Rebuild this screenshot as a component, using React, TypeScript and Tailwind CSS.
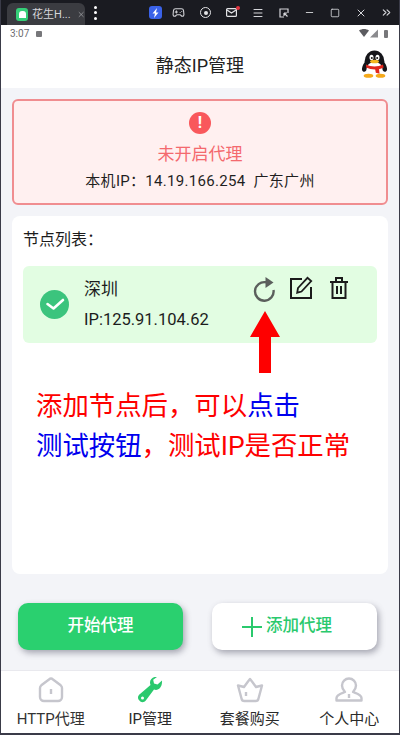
import React from "react";
import { Minus, Square, X, ChevronsRight, Menu, Gamepad2 } from "lucide-react";

const CJK = "font-['Roboto','Noto_Sans_CJK_SC',sans-serif]";
const COMMA = "\uFF0C";
const COLON = "\uFF1A";

const Penguin = () => (
  <svg width="27" height="28" viewBox="0 0 27 28">
    <ellipse cx="13.5" cy="12" rx="10" ry="11.5" fill="#15151a" />
    <ellipse cx="4" cy="17" rx="2.6" ry="5" fill="#15151a" transform="rotate(18 4 17)" />
    <ellipse cx="23" cy="17" rx="2.6" ry="5" fill="#15151a" transform="rotate(-18 23 17)" />
    <ellipse cx="13.5" cy="19" rx="8" ry="7" fill="#fff" />
    <ellipse cx="10.5" cy="7.5" rx="2" ry="2.8" fill="#fff" />
    <ellipse cx="16.5" cy="7.5" rx="2" ry="2.8" fill="#fff" />
    <circle cx="10.8" cy="8" r="1" fill="#111" />
    <circle cx="16.2" cy="8" r="1" fill="#111" />
    <ellipse cx="13.5" cy="11.5" rx="4.5" ry="1.8" fill="#f5b71e" />
    <path d="M5 14.5c5 2.5 12 2.5 17 0l.6 3c-1.5.9-3 1.4-4.6 1.7l.6 4.6-3.8-1-.6-3.4c-3.4 0-6.6-.7-9-2z" fill="#e0261c" />
    <ellipse cx="7.5" cy="25.8" rx="4.8" ry="2" fill="#f5a91a" />
    <ellipse cx="19.5" cy="25.8" rx="4.8" ry="2" fill="#f5a91a" />
  </svg>
);

const TitleBar = () => (
  <div className="flex h-[25px] shrink-0 items-end bg-[#1a1b21] pl-[6px] text-[#d5d6da]">
    <div className="flex h-[22px] w-[78px] items-center rounded-t-[6px] bg-[#3b3c41] pl-[9px]">
      <div className="flex h-[13px] w-[13px] items-center justify-center rounded-[3px] bg-[#35cf78]">
        <div className="h-[7px] w-[7px] rounded-t-[3px] bg-white" />
      </div>
      <span className="ml-[4px] text-[11px] leading-none whitespace-nowrap">花生H...</span>
      <X size={9} className="ml-[6px] text-[#a9aaae]" />
    </div>
    <div className="ml-[9px] flex h-[25px] flex-col items-center justify-center gap-[2.5px]">
      <div className="h-[3px] w-[3px] rounded-full bg-white" />
      <div className="h-[3px] w-[3px] rounded-full bg-white" />
      <div className="h-[3px] w-[3px] rounded-full bg-white" />
    </div>
    <div className="ml-[52px] flex h-[25px] items-center justify-center">
      <div className="flex h-[13px] w-[13px] items-center justify-center rounded-[3px] bg-[#3a62e8]">
        <svg width="7" height="10" viewBox="0 0 7 10" fill="#fff">
          <path d="M5 0L0.500 5.500H3L2 10l4.500-5.500H4z" />
        </svg>
      </div>
    </div>
    <div className="ml-[10px] flex h-[25px] items-center">
      <Gamepad2 size={13} />
    </div>
    <div className="ml-[15px] flex h-[25px] items-center">
      <div className="flex h-[11px] w-[11px] items-center justify-center rounded-full border-[1.5px] border-[#e2e3e6]">
        <div className="h-[4px] w-[4px] rounded-full bg-[#e2e3e6]" />
      </div>
    </div>
    <div className="relative ml-[15px] flex h-[25px] items-center">
      <svg width="11" height="9" viewBox="0 0 11 9" fill="none" stroke="#e2e3e6" strokeWidth="1.2">
        <rect x="0.6" y="0.6" width="9.8" height="7.8" rx="1" />
        <path d="M1 2l4.500 3L10 2" />
      </svg>
      <div className="absolute top-[6px] -right-[3px] h-[4px] w-[4px] rounded-full bg-[#e3343f]" />
    </div>
    <div className="ml-[15px] flex h-[25px] items-center">
      <Menu size={12} />
    </div>
    <div className="ml-[15px] flex h-[25px] items-center">
      <svg width="10" height="10" viewBox="0 0 10 10" fill="none" stroke="#d5d6da" strokeWidth="1.2">
        <path d="M9 5V1H1v8h4M5 5l3.500 3.500M5 5v3M5 5h3" />
      </svg>
    </div>
    <div className="ml-[15px] flex h-[25px] items-center">
      <Minus size={11} />
    </div>
    <div className="ml-[15px] flex h-[25px] items-center">
      <Square size={10} />
    </div>
    <div className="ml-[15px] flex h-[25px] items-center">
      <X size={12} />
    </div>
    <div className="ml-[13px] flex h-[25px] items-center">
      <ChevronsRight size={13} />
    </div>
  </div>
);

const StatusBar = () => (
  <div className="flex h-[17px] shrink-0 items-center bg-white pr-[11px] pl-[9px] text-[#6d6d70]">
    <span className="text-[10px] leading-none">3:07</span>
    <div className="ml-[7px] h-[6px] w-[6px] rounded-[1px] bg-[#77777a]" />
    <div className="ml-auto flex items-center gap-[1px]">
      <svg width="20" height="9" viewBox="0 0 20 9" fill="#5c5c60">
        <path d="M0 1.500C3-.5 7-.5 10 1.500L5 8z" />
        <path d="M19 0.500V8.500H11z" fill="#8b8b8e" />
      </svg>
      <div className="ml-[4px] h-[8px] w-[4px] rounded-[1px] bg-[#77777a]" />
    </div>
  </div>
);

const Header = () => (
  <div className="relative flex h-[46px] shrink-0 items-center justify-center bg-white pt-[1px]">
    <span className="text-[18px] leading-none text-[#222]">静态IP管理</span>
    <div className="absolute top-[8px] right-[11px]">
      <Penguin />
    </div>
  </div>
);

const ProxyStatus = () => (
  <div className="flex h-[106px] flex-col items-center rounded-[6px] border-2 border-[#f08d90] bg-[#fff0f0] pt-[11px]">
    <div className="flex h-[22px] w-[22px] items-center justify-center rounded-full bg-[#f9585c] text-[16px] leading-none font-bold text-white">
      !
    </div>
    <div className="mt-[9px] text-[17px] leading-[22px] text-[#f4696e]">未开启代理</div>
    <div className="mt-[6px] text-[15px] leading-[20px] tracking-[0.3px] whitespace-pre text-[#1f1f1f]">
      本机IP{COLON}14.19.166.254{"  "}广东广州
    </div>
  </div>
);

const NodeRow = () => (
  <div className="relative mt-[14px] flex h-[77px] items-center rounded-[6px] bg-[#e2fde2] pl-[17px]">
    <div className="flex h-[29px] w-[29px] items-center justify-center rounded-full bg-[#3bc47d]">
      <svg width="20" height="13" viewBox="0 0 20 13" fill="none" stroke="#fff" strokeWidth="2.6" strokeLinecap="round" strokeLinejoin="round">
        <path d="M2.500 6l6 4.500L18 2" />
      </svg>
    </div>
    <div className="ml-[15px] text-[16.500px] text-[#1c1c1c]">
      <div className="mb-[9px] text-[17px] leading-[22px]">深圳</div>
      <div className="leading-[22px]">IP:125.91.104.62</div>
    </div>
    <div className="absolute top-[10px] left-[229px] flex items-start">
      <svg width="24" height="26" viewBox="0 0 24 26" fill="none">
        <path d="M14 6.300A9.300 9.300 0 1 0 21.500 14" stroke="#5b5f5c" strokeWidth="2.400" />
        <path d="M13.500 1l8 5.500-8 5.500z" fill="#5b5f5c" />
      </svg>
      <svg className="ml-[13px]" width="24" height="24" viewBox="0 0 24 24" fill="none" stroke="#1b1b1b" strokeWidth="2">
        <path d="M13 3H2v19h20V11" />
        <path d="M9 12L18.500 1.800l3.700 3.200L12.500 15.500l-4.300 1.200z" strokeWidth="1.800" />
      </svg>
      <svg className="ml-[16px]" width="20" height="24" viewBox="0 0 20 24" fill="none" stroke="#1b1b1b" strokeWidth="2">
        <path d="M1 6h18M7 6V2h6v4M3.500 6v16h13V6M8 10v8M12 10v8" />
      </svg>
    </div>
  </div>
);

const RedArrow = () => (
  <svg className="absolute top-[311px] left-[248px]" width="32" height="62" viewBox="0 0 32 62">
    <path d="M16 0l15 26h-9v36H10V26H1z" fill="#fe0000" />
  </svg>
);

const Tip = () => (
  <div className="mt-[43px] ml-[13px] text-[26.400px] leading-[40px] whitespace-pre text-[#fe0000]">
    <div>
      添加节点后{COMMA}可以<span className="text-[#0000ee]">点击</span>
    </div>
    <div>
      <span className="text-[#0000ee]">测试按钮</span>
      {COMMA}测试IP是否正常
    </div>
  </div>
);

const NodeList = () => (
  <div className="mt-[11px] h-[358px] rounded-[8px] bg-white px-[11px] pt-[12px]">
    <div className="text-[16px] leading-[24px] text-[#1c1c1c]">节点列表{COLON}</div>
    <NodeRow />
    <Tip />
  </div>
);

const Actions = () => (
  <div className="mt-[29px] flex justify-between pr-[22px] pl-[17px]">
    <button className="h-[47px] w-[165px] rounded-[10px] bg-[#2ad06f] text-[16.500px] font-medium text-white shadow-[2px_3px_6px_rgba(70,70,90,0.45)]">
      开始代理
    </button>
    <button className="flex h-[47px] w-[165px] items-center justify-center rounded-[10px] bg-white pr-[15px] text-[16.500px] font-medium text-[#2ac96d] shadow-[2px_3px_6px_rgba(70,70,90,0.45)]">
      <svg className="mr-[4px]" width="20" height="20" viewBox="0 0 20 20" stroke="#2ac96d" strokeWidth="2">
        <path d="M0 10h20M10 0v20" />
      </svg>
      添加代理
    </button>
  </div>
);

const NAV_ITEMS = [
  {
    label: "HTTP代理",
    icon: (
      <svg width="26" height="26" viewBox="0 0 26 26" fill="none" stroke="#c6c6cd" strokeWidth="2.400">
        <path d="M2 11c0-1 .5-2 1.300-2.700L11 2.500a3 3 0 0 1 4 0l7.700 5.800c.8.700 1.300 1.700 1.300 2.700V20a4 4 0 0 1-4 4H6a4 4 0 0 1-4-4z" strokeLinejoin="round" />
        <path d="M13 12v5" />
      </svg>
    ),
  },
  {
    label: "IP管理",
    icon: (
      <svg width="26" height="26" viewBox="0 0 26 26" fill="#2ac96d">
        <path d="M25 3.500l-4.500 4-3.500-1-.8-3.700L20 0c-3.500-.8-7 2-7 5.500 0 1 .2 1.800.5 2.500L3 17c-2 1.600-2.500 3.500-1.500 5.500l1.800 2c2 1.200 4 .8 5.500-1L17 12.500c3.800 1.500 8.500-1.500 8-9zM5.500 22.500a1.500 1.500 0 1 1 0-3 1.500 1.500 0 0 1 0 3z" />
      </svg>
    ),
  },
  {
    label: "套餐购买",
    icon: (
      <svg width="28" height="26" viewBox="0 0 28 26" fill="none" stroke="#c6c6cd" strokeWidth="2.400" strokeLinejoin="round">
        <path d="M2 8.500l6 1.500 4-5.500 2-2.500 2 2.500 4 5.500 6-1.500-3.500 13a3 3 0 0 1-3 2.500H8.500a3 3 0 0 1-3-2.500z" />
        <path d="M10 15v4" />
      </svg>
    ),
  },
  {
    label: "个人中心",
    icon: (
      <svg width="28" height="26" viewBox="0 0 28 26" fill="none" stroke="#c6c6cd" strokeWidth="2.400" strokeLinejoin="round">
        <path d="M14 1.500a7 7 0 0 1 7 7c0 3-1.500 5-3 6.500 3 1.200 8.500 2.500 8.500 6v2.500h-25V21c0-3.500 5.500-4.800 8.500-6-1.500-1.500-3-3.500-3-6.500a7 7 0 0 1 7-7z" />
        <path d="M14 17v4" />
      </svg>
    ),
  },
];

const BottomNav = () => (
  <div className="mt-auto grid h-[63px] shrink-0 grid-cols-4 border-t border-[#e9e9ee] bg-white">
    {NAV_ITEMS.map((item, i) => (
      <div key={item.label} className="flex flex-col items-center pt-[5px]">
        <div className="flex h-[28px] items-center">{item.icon}</div>
        <span className={`mt-[5px] text-[15px] leading-[20px] whitespace-nowrap ${i === 0 ? "text-[#333]" : "text-[#2a2a2a]"}`}>
          {item.label}
        </span>
      </div>
    ))}
  </div>
);

export default function App() {
  return (
    <div className={`relative flex h-[735px] w-[400px] flex-col overflow-hidden border-x border-b-2 border-[#3a3b48] bg-[#f3f4f8] ${CJK}`}>
      <TitleBar />
      <StatusBar />
      <Header />
      <div className="pt-[11px] pr-[11px] pl-[11px]">
        <ProxyStatus />
        <NodeList />
      </div>
      <Actions />
      <BottomNav />
      <RedArrow />
    </div>
  );
}
